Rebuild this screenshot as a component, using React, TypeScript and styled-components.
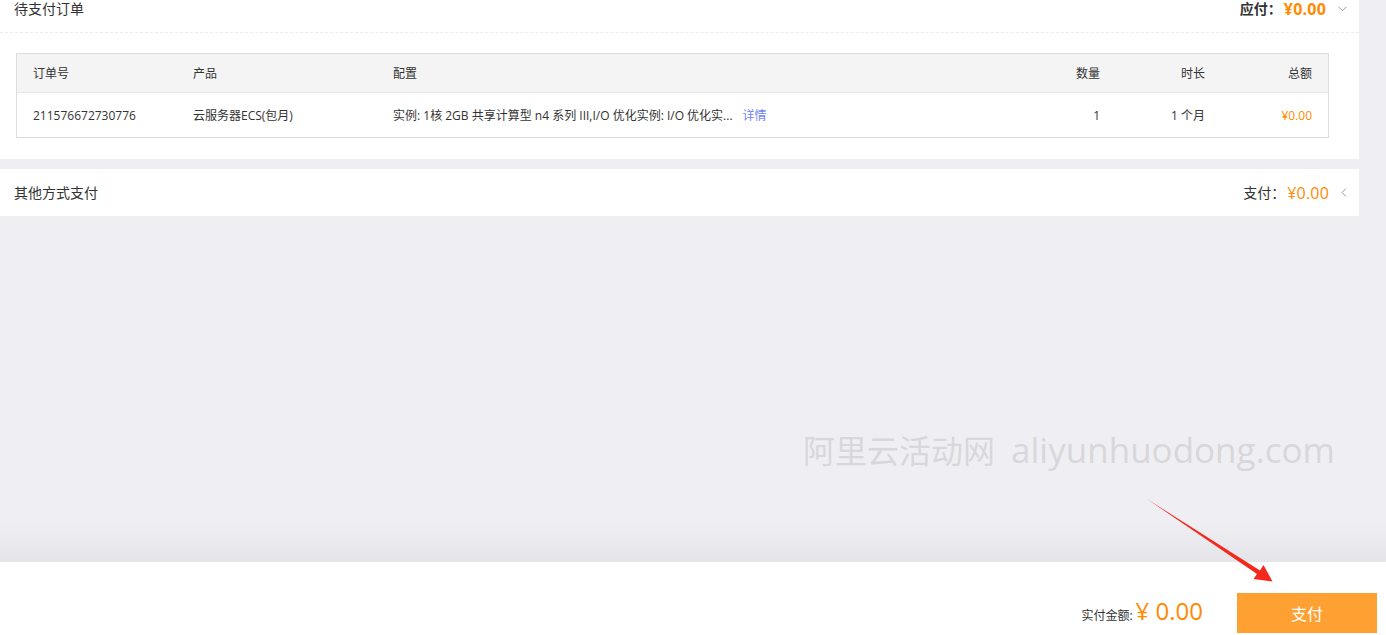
import React from 'react';
import styled, { createGlobalStyle } from 'styled-components';

const GlobalStyle = createGlobalStyle`
  html, body {
    margin: 0;
    padding: 0;
    background: #efeff3;
  }
  body {
    font-family: "Open Sans", "Noto Sans CJK SC", sans-serif;
    color: #333;
    overflow: hidden;
  }
  * {
    box-sizing: border-box;
  }
`;

const Page = styled.div`
  position: relative;
  height: 100vh;
  display: flex;
  flex-direction: column;
`;

const Main = styled.main`
  flex: 1;
  display: flex;
  flex-direction: column;
  gap: 10px;
  background: linear-gradient(to bottom, #efeff3 0, #efeff3 calc(100% - 40px), #e5e4e9 100%);
`;

const Card = styled.section`
  width: 1359px;
  background: #fff;
`;

const CardHeader = styled.div<{ $dashed?: boolean; $tall?: boolean }>`
  display: flex;
  align-items: ${(p) => (p.$tall ? 'center' : 'flex-start')};
  justify-content: space-between;
  height: ${(p) => (p.$tall ? '47px' : '33px')};
  padding: 0 12px 0 14px;
  border-bottom: ${(p) => (p.$dashed ? '1px dashed #ececec' : 'none')};
  font-size: 14px;
  line-height: 18px;
`;

const Title = styled.div`
  color: #333;
`;

const Summary = styled.div`
  display: flex;
  align-items: center;
`;

const SumLabel = styled.span<{ $bold?: boolean }>`
  font-weight: ${(p) => (p.$bold ? 700 : 400)};
  color: #333;
`;

const SumValue = styled.span<{ $bold?: boolean }>`
  font-size: 16px;
  font-weight: ${(p) => (p.$bold ? 700 : 400)};
  color: #ff8a00;
  margin-left: 2px;
  letter-spacing: 0.2px;
`;

const Chevron = styled.span`
  display: inline-flex;
  margin-left: 12px;
  color: #999;
`;

const CardBody = styled.div`
  padding: 20px 30px 21px 16px;
`;

const Table = styled.div`
  border: 1px solid #dcdcdc;
  font-size: 12px;
  line-height: 16px;
`;

const Row = styled.div<{ $head?: boolean }>`
  display: grid;
  grid-template-columns: 160px 200px 1fr 100px 105px 107px;
  align-items: center;
  height: ${(p) => (p.$head ? '39px' : '44px')};
  padding-top: 1px;
  background: ${(p) => (p.$head ? '#f4f4f4' : '#fff')};
  border-bottom: ${(p) => (p.$head ? '1px solid #e8e8e8' : 'none')};
  color: #333;
`;

const Cell = styled.div<{ $right?: boolean; $orange?: boolean }>`
  padding: 0 16px;
  text-align: ${(p) => (p.$right ? 'right' : 'left')};
  color: ${(p) => (p.$orange ? '#ff8a00' : 'inherit')};
  white-space: nowrap;
`;

const ConfigCell = styled.div`
  display: flex;
  align-items: center;
  padding: 0 16px;
`;

const ConfigText = styled.span`
  white-space: nowrap;
`;

const DetailLink = styled.a`
  margin-left: 10px;
  color: #6f7ff2;
  text-decoration: none;
  cursor: pointer;
`;

const WatermarkRow = styled.div`
  display: flex;
  justify-content: flex-end;
  align-items: baseline;
  padding: 204px 51px 0 0;
  color: #d8d7dc;
  white-space: nowrap;
`;

const WaterCn = styled.span`
  font-size: 32px;
  line-height: 40px;
  margin-right: 16px;
`;

const WaterEn = styled.span`
  font-size: 35px;
  line-height: 40px;
`;

const Footer = styled.footer`
  height: 73px;
  background: #fff;
  display: flex;
  justify-content: flex-end;
  align-items: flex-end;
  padding: 0 9px 2px 0;
`;

const Total = styled.div`
  display: flex;
  align-items: baseline;
  margin-right: 34px;
  padding-bottom: 6px;
`;

const TotalLabel = styled.span`
  font-size: 12px;
  color: #333;
`;

const TotalValue = styled.span`
  font-size: 24px;
  color: #ff8a00;
  margin-left: 3px;
`;

const PayButton = styled.button`
  width: 140px;
  height: 40px;
  border: none;
  background: #ffa033;
  color: #fff;
  font-family: inherit;
  font-size: 16px;
  cursor: pointer;
`;

const Arrow = styled.svg`
  position: absolute;
  left: 0;
  top: 0;
  width: 100%;
  height: 100%;
  pointer-events: none;
`;

const ChevronDown = () => (
  <svg width="9" height="6" viewBox="0 0 9 6" fill="none">
    <path d="M0.5 0.8 L4.5 4.8 L8.5 0.8" stroke="#999" strokeWidth="1" />
  </svg>
);

const ChevronLeft = () => (
  <svg width="6" height="9" viewBox="0 0 6 9" fill="none">
    <path d="M5 0.5 L1 4.5 L5 8.5" stroke="#999" strokeWidth="1" />
  </svg>
);

const App: React.FC = () => (
  <Page>
    <GlobalStyle />
    <Main>
      <Card>
        <CardHeader $dashed>
          <Title>待支付订单</Title>
          <Summary>
            <SumLabel $bold>应付：</SumLabel>
            <SumValue $bold>¥0.00</SumValue>
            <Chevron>
              <ChevronDown />
            </Chevron>
          </Summary>
        </CardHeader>
        <CardBody>
          <Table>
            <Row $head>
              <Cell>订单号</Cell>
              <Cell>产品</Cell>
              <Cell>配置</Cell>
              <Cell $right>数量</Cell>
              <Cell $right>时长</Cell>
              <Cell $right>总额</Cell>
            </Row>
            <Row>
              <Cell>211576672730776</Cell>
              <Cell>云服务器ECS(包月)</Cell>
              <ConfigCell>
                <ConfigText>实例: 1核 2GB 共享计算型 n4 系列 III,I/O 优化实例: I/O 优化实...</ConfigText>
                <DetailLink>详情</DetailLink>
              </ConfigCell>
              <Cell $right>1</Cell>
              <Cell $right>1 个月</Cell>
              <Cell $right $orange>¥0.00</Cell>
            </Row>
          </Table>
        </CardBody>
      </Card>
      <Card>
        <CardHeader $tall>
          <Title>其他方式支付</Title>
          <Summary>
            <SumLabel>支付：</SumLabel>
            <SumValue>¥0.00</SumValue>
            <Chevron>
              <ChevronLeft />
            </Chevron>
          </Summary>
        </CardHeader>
      </Card>
      <WatermarkRow>
        <WaterCn>阿里云活动网</WaterCn>
        <WaterEn>aliyunhuodong.com</WaterEn>
      </WatermarkRow>
    </Main>
    <Footer>
      <Total>
        <TotalLabel>实付金额:</TotalLabel>
        <TotalValue>¥ 0.00</TotalValue>
      </Total>
      <PayButton>支付</PayButton>
    </Footer>
    <Arrow viewBox="0 0 1386 635">
      <polygon
        points="1147,499 1260,570.5 1263.5,565 1272.5,581.5 1253.5,579 1257,574"
        fill="#f5281e"
      />
    </Arrow>
  </Page>
);

export default App;
